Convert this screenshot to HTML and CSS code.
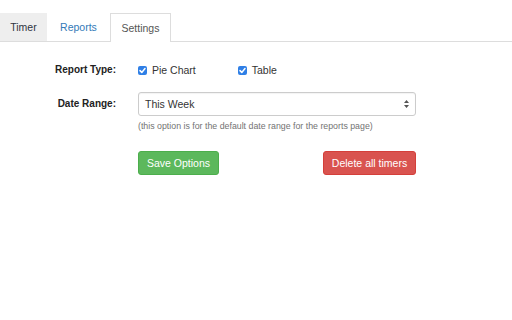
FILE: index.html
```html
<!DOCTYPE html>
<html>
<head>
<meta charset="utf-8">
<link rel="stylesheet" href="styles.css">
</head>
<body>
<nav class="tabs">
  <span class="tab tab-timer">Timer</span>
  <span class="tab tab-reports">Reports</span>
  <span class="tab tab-settings">Settings</span>
</nav>
<form class="form">
  <label class="label">Report Type:</label>
  <div class="control checks">
    <span class="check"><span class="box"><svg viewBox="0 0 9 9" width="9" height="9"><path d="M2 4.6 L3.8 6.4 L7 2.6" fill="none" stroke="#fff" stroke-width="1.5" stroke-linecap="round" stroke-linejoin="round"/></svg></span>Pie Chart</span>
    <span class="check"><span class="box"><svg viewBox="0 0 9 9" width="9" height="9"><path d="M2 4.6 L3.8 6.4 L7 2.6" fill="none" stroke="#fff" stroke-width="1.5" stroke-linecap="round" stroke-linejoin="round"/></svg></span>Table</span>
  </div>
  <label class="label label-date">Date Range:</label>
  <div class="control">
    <div class="select"><span>This Week</span><svg class="arrows" viewBox="0 0 5 8" width="5" height="8"><path d="M2.5 0 L5 3 L0 3 Z M2.5 8 L5 5 L0 5 Z" fill="#555"/></svg></div>
    <p class="help">(this option is for the default date range for the reports page)</p>
  </div>
  <div class="spacer"></div>
  <div class="control buttons">
    <button type="button" class="btn btn-save">Save Options</button>
    <button type="button" class="btn btn-delete">Delete all timers</button>
  </div>
</form>
</body>
</html>
```
FILE: styles.css
```css
html, body {
  margin: 0;
  padding: 0;
  background: #fff;
}
body {
  font-family: "Liberation Sans", Arial, Helvetica, sans-serif;
  font-size: 10.5px;
  color: #333;
}
.tabs {
  display: flex;
  margin-top: 13px;
  height: 28px;
  border-bottom: 1px solid #ddd;
}
.tab {
  display: flex;
  align-items: center;
  justify-content: center;
  box-sizing: border-box;
  height: 28px;
}
.tab-timer {
  width: 47px;
  background: #eee;
  color: #2f3440;
}
.tab-reports {
  width: 63px;
  color: #337ab7;
}
.tab-settings {
  width: 61px;
  height: 29px;
  color: #555;
  background: #fff;
  border: 1px solid #ddd;
  border-bottom: none;
  margin-bottom: -1px;
}
.form {
  display: grid;
  grid-template-columns: 116px 278px;
  column-gap: 22px;
  margin: 21px 0 0 0;
}
.label {
  font-weight: bold;
  font-size: 10px;
  color: #222;
  text-align: right;
  line-height: 14px;
}
.label-date {
  margin-top: 15px;
  line-height: 24px;
}
.checks {
  display: flex;
  align-items: center;
  height: 14px;
}
.check {
  display: flex;
  align-items: center;
  color: #333;
}
.check + .check {
  margin-left: 42px;
}
.box {
  display: flex;
  width: 9px;
  height: 9px;
  border-radius: 2px;
  background: #2f7fe6;
  margin-right: 5px;
}
.select {
  margin-top: 15px;
  box-sizing: border-box;
  height: 24px;
  border: 1px solid #ccc;
  border-radius: 3px;
  display: flex;
  align-items: center;
  justify-content: space-between;
  padding: 0 5px 0 6px;
  color: #333;
  box-shadow: inset 0 1px 1px rgba(0,0,0,0.05);
}
.arrows {
  margin-right: 1px;
}
.help {
  margin: 5px 0 0 0;
  font-size: 8.8px;
  line-height: 11px;
  color: #737373;
}
.buttons {
  display: flex;
  justify-content: space-between;
  margin-top: 19px;
}
.btn {
  font-family: inherit;
  font-size: 10.5px;
  color: #fff;
  height: 24px;
  box-sizing: border-box;
  border-radius: 3px;
  border: 1px solid;
  padding: 0;
  margin: 0;
}
.btn-save {
  width: 81px;
  background: #5cb85c;
  border-color: #4cae4c;
}
.btn-delete {
  width: 93px;
  background: #d9534f;
  border-color: #d43f3a;
}
```
